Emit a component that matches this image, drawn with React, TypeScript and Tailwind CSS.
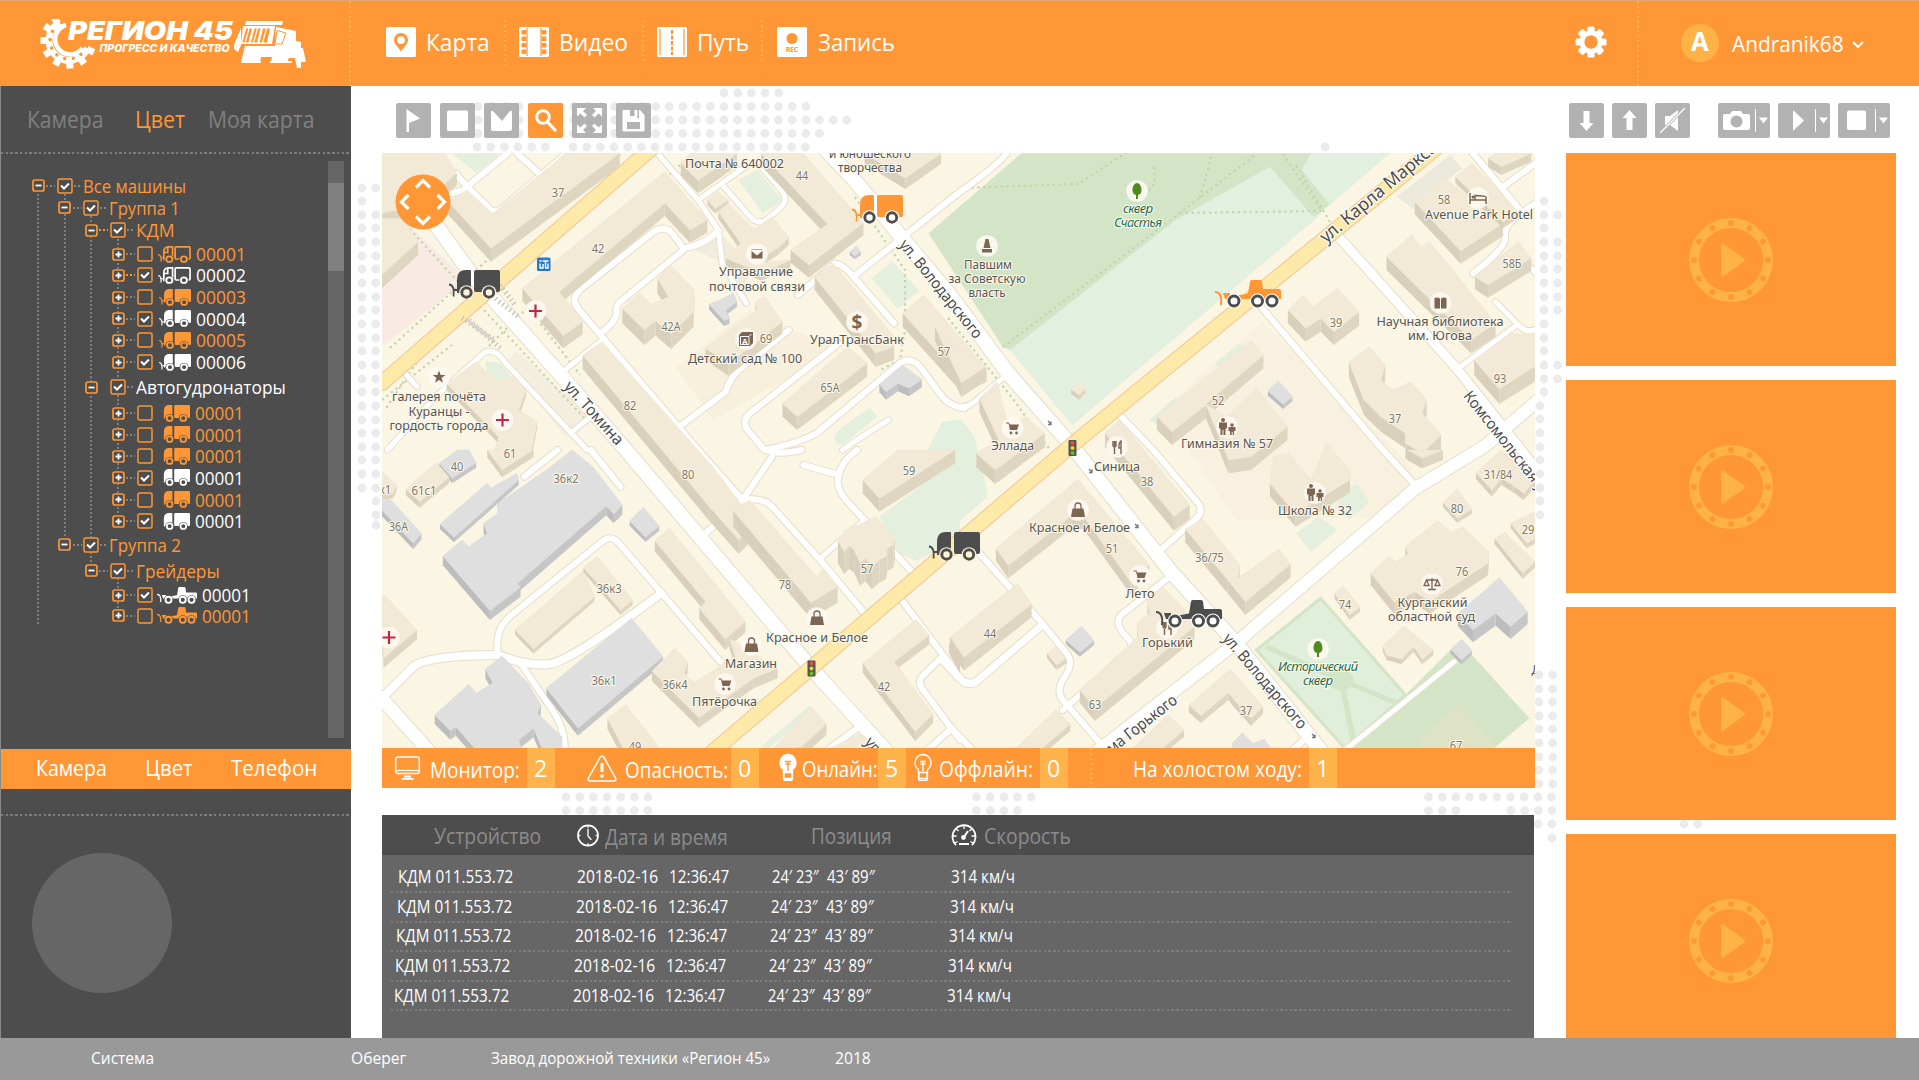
import { useLayoutEffect, useRef, type ReactNode } from "react";

/* ---------- text that is condensed to a fixed width ---------- */
function Fit({ w, children, className = "" }: { w: number; children: string; className?: string }) {
  const ref = useRef<HTMLSpanElement>(null);
  useLayoutEffect(() => {
    const el = ref.current;
    if (el) el.style.transform = `scaleX(${w / el.offsetWidth})`;
  }, [w, children]);
  return (
    <span className={`inline-block shrink-0 whitespace-nowrap ${className}`} style={{ width: w }}>
      <span ref={ref} className="inline-block origin-left whitespace-pre">{children}</span>
    </span>
  );
}

/* ---------- vehicles ---------- */
type VehicleProps = { className: string; wheel?: string; hub?: string; outline?: boolean; plow?: boolean };

function Truck({ className, wheel = "currentColor", hub = "#4d4d4d", outline = false, plow = true }: VehicleProps) {
  return (
    <svg viewBox="0 0 51 29" className={className} fill="none" preserveAspectRatio="none">
      {plow && <path d="M0 14.500c4 0 5.500 5 4.500 12M4 20h5" stroke="currentColor" strokeWidth="1.800" />}
      {outline ? (
        <g stroke="currentColor" strokeWidth="2.600">
          <path d="M9 23V10c0-5 2-8.500 7-8.500h6.500V23zM9 11h6V2" />
          <rect x="26.500" y="1.500" width="23" height="20.500" rx="1.500" />
        </g>
      ) : (
        <g fill="currentColor">
          <path d="M8 23V11C8 4 10 0 17 0h4q1 0 1 1v22z" />
          <rect x="25" width="26" height="22" rx="2" />
        </g>
      )}
      {[17.5, 40].map((x) => (
        <g key={x}>
          <circle cx={x} cy="22.500" r="7.300" fill={hub} />
          <circle cx={x} cy="22.500" r="4.700" stroke={wheel} strokeWidth="2.900" />
        </g>
      ))}
    </svg>
  );
}

function Grader({ className, wheel = "currentColor", hub = "#4d4d4d" }: VehicleProps) {
  return (
    <svg viewBox="0 0 66 28" className={className} fill="none" preserveAspectRatio="none">
      <path d="M0 12c5 0 7 5 6 13" stroke="currentColor" strokeWidth="2" />
      <path d="M8 13h7v2h10l8-1.500L35 1.500Q35 0 37 0h8q2 0 2 1.500l1 7.500h16q2 0 2 2v8H10z" fill="currentColor" />
      {[19, 42.5, 57].map((x) => (
        <g key={x}>
          <circle cx={x} cy="21" r="7.600" fill={hub} />
          <circle cx={x} cy="21" r="5" stroke={wheel} strokeWidth="3" />
        </g>
      ))}
    </svg>
  );
}

/* ---------- halftone backdrop: [y, first x, count] ---------- */
const DOT_RUNS: number[][] = [
  [93, 724, 5], [106.5, 478, 4], [106.5, 560, 19], [120, 478, 28], [133.5, 478, 26], [147, 477, 6], [147, 573, 18],
  [147, 1325, 1],
  [188, 362, 2], [201, 362, 1], [215, 362, 2], [228, 362, 2], [242, 362, 2], [256, 362, 2], [269, 362, 2], [283, 362, 2],
  [297, 362, 2], [310, 362, 2], [324, 362, 2], [338, 362, 2], [351, 362, 2], [365, 362, 2], [379, 362, 2],
  [392, 362, 2], [406, 362, 2], [420, 362, 2], [433, 362, 2], [447, 362, 2], [460, 362, 2], [474, 362, 2], [488, 362, 2],
  [501, 376, 1], [515, 376, 1], [525, 376, 1],
  [201, 1544, 1], [215, 1544, 2], [228, 1544, 1], [242, 1544, 2], [256, 1544, 2], [269, 1544, 2], [283, 1544, 2],
  [297, 1544, 2], [310, 1544, 2], [324, 1544, 1], [338, 1544, 1], [351, 1544, 1], [365, 1544, 2], [379, 1544, 2],
  [392, 1544, 1], [406, 1540, 1], [419, 1540, 1], [433, 1540, 1], [447, 1540, 1], [460, 1540, 1], [474, 1540, 1],
  [488, 1540, 1], [501, 1540, 1], [515, 1540, 1],
  [675, 1539, 2], [689, 1539, 2], [702, 1539, 2], [716, 1539, 2], [729, 1539, 2], [743, 1539, 2], [757, 1539, 2],
  [770, 1539, 2], [784, 1539, 2], [797, 566, 7], [810.5, 566, 7], [797, 976.5, 5], [810.5, 976.5, 4],
  [797, 1428.5, 10], [810.5, 1428.5, 3], [810.5, 1511, 4], [824, 1538, 2], [838, 1552, 1], [824, 1684, 2],
];

function Halftone() {
  return (
    <svg viewBox="0 0 1919 1080" className="pointer-events-none absolute inset-0 h-[1080px] w-[1919px]" fill="#ebebeb">
      {DOT_RUNS.flatMap(([y, x, n]) =>
        Array.from({ length: n }, (_, i) => <circle key={`${y}-${x}-${i}`} cx={x + i * 13.66} cy={y} r="4.400" />),
      )}
    </svg>
  );
}

/* ---------- header ---------- */
function Logo() {
  return (
    <svg viewBox="0 0 268 50" className="h-[50px] w-[268px]" fill="#fff">
      {[25, 56, 87, 118, 149, 180, 211, 238].map((a) => (
        <rect key={a} x="50" y="18" width="7.500" height="7" transform={`rotate(${a} 29.500 21.500)`} />
      ))}
      <path d="M21 3.500A20 20 0 1 0 48.500 29" fill="none" stroke="#fff" strokeWidth="7" />
      <path d="M27 6A15 15 0 1 0 43.500 29" fill="none" stroke="#fff" strokeWidth="4.500" />
      {[48, 75, 102, 129, 156, 183, 210].map((a) => (
        <circle key={a} cx="48" cy="21.500" r="1.700" fill="#ff9736" transform={`rotate(${a} 29.500 21.500)`} />
      ))}
      <g fontFamily="Inter" fontStyle="italic" stroke="#ff9736" strokeWidth="3" paintOrder="stroke">
        <text x="29" y="20.500" fontWeight="900" fontSize="25.500" textLength="165" lengthAdjust="spacingAndGlyphs">РЕГИОН 45</text>
      </g>
      <text x="60.500" y="33.200" fontFamily="Inter" fontStyle="italic" fontWeight="800" fontSize="10.800" textLength="130" lengthAdjust="spacingAndGlyphs">ПРОГРЕСС И КАЧЕСТВО</text>
      <path d="M207 2h37l-1 4h-37zM204 7h32l-3 18h-31zM237 8l20 4v10l5 1v26h-4l-2-10h-6l-2 4H202l4-16h30zM202 9l-7 17v4l4 3 3-7zM260 29h4l3 14h-5z" />
      <path d="M207 9.500h6l-3.500 14h-6zM215.500 9.500h6l-3.500 14h-6zM224 9.500h7l-3 14h-7.500z" fill="#ff9736" />
      <path d="M210 9l-4 15M218.500 9l-4 15M227.500 9l-4 15" stroke="#fff" strokeWidth="1.200" />
      <path d="M238 11.500l9 2.500-4 11h-7z" fill="none" stroke="#ff9736" strokeWidth="1" />
      <path d="M221 43l1-5h11l-1 5z" fill="#ff9736" />
      <path d="M202 43h20M231 43h22" stroke="#fff" strokeWidth="1.800" />
    </svg>
  );
}

const NavIcon = ({ children }: { children: ReactNode }) => (
  <svg viewBox="0 0 30 30" className="h-[30px] w-[30px] shrink-0"><rect width="30" height="30" rx="1.500" fill="#fff" />{children}</svg>
);

const VDots = ({ className }: { className: string }) => (
  <span className={`w-[2px] shrink-0 bg-[repeating-linear-gradient(#ffb347_0_2px,transparent_2px_4.900px)] ${className}`} />
);

function Header() {
  return (
    <header className="relative flex h-[86px] border-t border-[#e0a571] bg-[#ff9736] text-white">
      <div className="w-[349px] shrink-0 pl-[39px] pt-[18px]"><Logo /></div>
      <VDots className="h-[85px]" />
      <nav className="flex h-[82px] items-center pl-[35px] text-[24.500px]">
        <NavIcon>
          <path fillRule="evenodd" d="M15 6a7 7 0 0 0-7 7c0 4 4 6.500 7 11.500 3-5 7-7.500 7-11.500a7 7 0 0 0-7-7zm0 3.200a3.900 3.900 0 1 1 0 7.800 3.900 3.900 0 0 1 0-7.800z" fill="#ff9736" />
        </NavIcon>
        <Fit w={64} className="ml-[10px]">Карта</Fit>
        <VDots className="ml-[14px] h-[45px]" />
        <span className="w-[13px]" />
        <NavIcon>
          <path d="M8 1v28M22 1v28" stroke="#ff9736" strokeWidth="1.200" />
          {[3, 9.5, 16, 22.5].map((y) => (
            <g key={y} fill="#ff9736"><rect x="2.500" y={y} width="5" height="4.500" rx="1" /><rect x="22.500" y={y} width="5" height="4.500" rx="1" /></g>
          ))}
        </NavIcon>
        <Fit w={69} className="ml-[10px]">Видео</Fit>
        <VDots className="ml-[14px] h-[45px]" />
        <span className="w-[13px]" />
        <NavIcon>
          <path d="M3 2v26M27 2v26" stroke="#ff9736" strokeWidth="1.200" />
          <path d="M15 3v25" stroke="#ff9736" strokeWidth="2.200" strokeDasharray="4 1.500" />
        </NavIcon>
        <Fit w={52} className="ml-[10px]">Путь</Fit>
        <VDots className="ml-[12px] h-[45px]" />
        <span className="w-[14px]" />
        <NavIcon>
          <circle cx="15" cy="11.500" r="5.500" fill="#ff9736" />
          <text x="15" y="25.200" fontFamily="Open Sans" fontWeight="700" fontSize="7" textAnchor="middle" fill="#ff9736" textLength="12.500">REC</text>
        </NavIcon>
        <Fit w={77} className="ml-[11px]">Запись</Fit>
      </nav>
      <div className="ml-auto flex h-[85px]">
        <svg viewBox="-16 -16 32 32" className="mr-[30.500px] mt-[25px] h-8 w-8">
          {[0, 45, 90, 135].map((a) => <rect key={a} x="-3.600" y="-15.500" width="7.200" height="31" rx="1.500" fill="#fff" transform={`rotate(${a})`} />)}
          <circle r="11.500" fill="#fff" /><circle r="6.700" fill="#ff9736" />
        </svg>
        <VDots className="h-[85px]" />
        <div className="ml-[42px] mt-[23px] flex h-[38px] w-[38px] items-center justify-center rounded-full bg-[#ffb347] pb-1 text-[27px] font-bold"><Fit w={18}>A</Fit></div>
        <div className="ml-[13px] mt-[24px] text-[22.500px] leading-[38px]"><Fit w={112}>Andranik68</Fit></div>
        <svg viewBox="0 0 12 8" className="ml-[8px] mr-[55px] mt-[40px] h-2 w-3"><path d="M1 1l5 5 5-5" fill="none" stroke="#fff" strokeWidth="2" /></svg>
      </div>
    </header>
  );
}

/* ---------- sidebar ---------- */
const HLine = ({ className = "" }: { className?: string }) => (
  <div className={`h-[2px] bg-[repeating-linear-gradient(90deg,#7d7d7d_0_2.400px,transparent_2.400px_4.730px)] ${className}`} />
);

function Expander({ open }: { open: boolean }) {
  return (
    <svg viewBox="0 0 13 13" className="h-[13px] w-[13px] shrink-0 bg-[#4d4d4d]" fill="none">
      <rect x="1" y="1" width="11" height="11" rx="2" stroke="#ff9736" strokeWidth="1.700" />
      <path d={open ? "M3.5 6.500h6" : "M3.5 6.500h6M6.500 3.500v6"} stroke="#fff" strokeWidth="1.800" />
    </svg>
  );
}

function Check({ on }: { on: boolean }) {
  return (
    <svg viewBox="0 0 16 16" className="h-4 w-4 shrink-0 bg-[#4d4d4d]" fill="none">
      <rect x="1" y="1" width="14" height="14" rx="1.500" stroke="#ff9736" strokeWidth="1.500" />
      {on && <path d="M4 7.500l3 3L12 5.500" stroke="#fff" strokeWidth="2" />}
    </svg>
  );
}

type Row = { lvl: 0 | 1 | 2 | 3; gap: string; t: string; w: number; on?: boolean; white?: boolean; v?: "kdmo" | "kdm" | "tank" | "grader"; hot?: boolean; bare?: boolean };
const ROWS: Row[] = [
  { lvl: 0, gap: "mt-0", t: "Все машины", w: 103, on: true },
  { lvl: 1, gap: "mt-[2px]", t: "Группа 1", w: 71, on: true },
  { lvl: 2, gap: "mt-[2.5px]", t: "КДМ", w: 39, on: true, hot: true },
  { lvl: 3, gap: "mt-[4px]", t: "00001", w: 50, v: "kdmo" },
  { lvl: 3, gap: "mt-[1px]", t: "00002", w: 50, v: "kdmo", on: true, white: true, hot: true },
  { lvl: 3, gap: "mt-[2px]", t: "00003", w: 50, v: "kdm" },
  { lvl: 3, gap: "mt-[1.5px]", t: "00004", w: 50, v: "kdm", on: true, white: true },
  { lvl: 3, gap: "mt-[1.5px]", t: "00005", w: 50, v: "kdm" },
  { lvl: 3, gap: "mt-[2px]", t: "00006", w: 50, v: "kdm", on: true, white: true },
  { lvl: 2, gap: "mt-[5px]", t: "Автогудронаторы", w: 150, on: true, white: true, bare: true },
  { lvl: 3, gap: "mt-[6px]", t: "00001", w: 49, v: "tank" },
  { lvl: 3, gap: "mt-[1.5px]", t: "00001", w: 49, v: "tank" },
  { lvl: 3, gap: "mt-[1.5px]", t: "00001", w: 49, v: "tank" },
  { lvl: 3, gap: "mt-[1.5px]", t: "00001", w: 49, v: "tank", on: true, white: true },
  { lvl: 3, gap: "mt-[2px]", t: "00001", w: 49, v: "tank" },
  { lvl: 3, gap: "mt-[1.5px]", t: "00001", w: 49, v: "tank", on: true, white: true },
  { lvl: 1, gap: "mt-[3.5px]", t: "Группа 2", w: 72, on: true },
  { lvl: 2, gap: "mt-[6px]", t: "Грейдеры", w: 84, on: true },
  { lvl: 3, gap: "mt-[4.5px]", t: "00001", w: 49, v: "grader", on: true, white: true },
  { lvl: 3, gap: "mt-[0.5px]", t: "00001", w: 49, v: "grader" },
];
const INDENT = ["pl-[31px]", "pl-[57.5px]", "pl-[84px]", "pl-[111px]"];

function TreeRow({ r }: { r: Row }) {
  const link = r.hot
    ? "bg-[repeating-linear-gradient(90deg,#ff9736_0_2px,transparent_2px_4px)]"
    : "bg-[repeating-linear-gradient(90deg,#858585_0_2px,transparent_2px_4px)]";
  return (
    <div className={`relative flex h-5 items-center ${INDENT[r.lvl]} ${r.gap} ${r.white ? "text-white" : "text-[#ff9736]"}`}>
      <Expander open={r.lvl < 3} />
      <span className={`mx-[1.500px] h-[2px] w-[9px] ${r.bare ? "" : link}`} />
      <Check on={!!r.on} />
      {r.v ? (
        <>
          {r.v === "kdmo" && <Truck outline className="ml-[5.500px] h-[17px] w-[33px]" />}
          {r.v === "kdm" && <Truck className="ml-[6.500px] h-[17px] w-[32px]" />}
          {r.v === "tank" && <Truck plow={false} className="ml-[6px] h-[17px] w-[31px]" />}
          {r.v === "grader" && <Grader className="ml-[4.500px] h-[17px] w-[40px]" />}
          <Fit w={r.w} className="ml-[5px] text-[18.500px] leading-5">{r.t}</Fit>
        </>
      ) : (
        <>
          <span className="mx-[1px] h-[2px] w-[8px] bg-[repeating-linear-gradient(90deg,#858585_0_2px,transparent_2px_4px)]" />
          <Fit w={r.w} className="text-[18.500px] leading-5">{r.t}</Fit>
        </>
      )}
    </div>
  );
}

const GUIDE = "absolute w-[2px] bg-[repeating-linear-gradient(#808080_0_2px,transparent_2px_4px)]";

function Sidebar() {
  return (
    <aside className="relative flex h-[952px] w-[351px] shrink-0 flex-col border-l border-[#8a8a8a] bg-[#4d4d4d]">
      <div className="flex h-[66px] items-center pl-[26px] text-[23px] text-[#808080]">
        <Fit w={76}>Камера</Fit>
        <Fit w={50} className="ml-[32px] text-[#ff9736]">Цвет</Fit>
        <Fit w={107} className="ml-[23px]">Моя карта</Fit>
      </div>
      <HLine />
      <div className="relative flex h-[594.500px]">
        <div className={`${GUIDE} left-[36px] top-[40px] h-[432px]`} />
        <div className={`${GUIDE} left-[63px] top-[40px] h-[343px]`} />
        <div className={`${GUIDE} left-[89px] top-[62px] h-[348px]`} />
        <div className={`${GUIDE} left-[116px] top-[85px] h-[288px]`} />
        <div className={`${GUIDE} left-[116px] top-[424px] h-[36px]`} />
        <div className="-ml-[0.500px] w-[327px] pt-[21.500px]">{ROWS.map((r, i) => <TreeRow key={i} r={r} />)}</div>
        <div className="ml-[0.500px] mt-[7px] h-[577px] w-[15.500px] bg-[#666] pt-[22px]"><div className="h-[88px] bg-[#808080]" /></div>
      </div>
      <div className="flex h-[40px] items-center bg-[#ff9736] pb-0.5 pl-[34.500px] text-[22px] text-white">
        <Fit w={71}>Камера</Fit>
        <Fit w={48} className="ml-[38px]">Цвет</Fit>
        <Fit w={86} className="ml-[38px]">Телефон</Fit>
      </div>
      <HLine className="mt-[25.500px]" />
      <div className="ml-[30.500px] mt-[36.500px] h-[140px] w-[140px] rounded-full bg-[#666]" />
    </aside>
  );
}

/* ---------- toolbar ---------- */
const Tool = ({ hot = false, wide = false, children }: { hot?: boolean; wide?: boolean; children: ReactNode }) => (
  <button className={`flex h-[35px] shrink-0 items-center rounded-[2px] ${wide ? "w-[52px]" : "w-[35px]"} ${hot ? "bg-[#ff9736]" : "bg-[#b2b2b2]"}`}>
    <svg viewBox="0 0 35 35" className="h-[35px] w-[35px] shrink-0" fill="#fff">{children}</svg>
    {wide && <svg viewBox="0 0 17 35" className="h-[35px] w-[17px]"><path d="M2.500 6v23" stroke="#fff" /><path d="M6 14.500h9l-4.500 6z" fill="#fff" /></svg>}
  </button>
);

function Toolbar() {
  return (
    <div className="flex h-[67px] items-start pl-[44.500px] pt-[17px]">
      <div className="flex gap-[9.100px]">
        <Tool><path d="M10.500 6L24 15.500 13 20v9h-2.500z" /></Tool>
        <Tool><rect x="7" y="7.500" width="21" height="20.500" rx="1.500" /></Tool>
        <Tool><path d="M7 9q0-2 2-1l9 10 8-10q2-1 2 1v17q0 2-2 2H9q-2 0-2-2z" /></Tool>
        <Tool hot><circle cx="15" cy="14" r="6.300" fill="none" stroke="#fff" strokeWidth="3" /><path d="M19.500 19l7.500 8" stroke="#fff" strokeWidth="3.200" strokeLinecap="round" /></Tool>
        <Tool><path d="M5 5h9l-3 3 4 4-2.500 2.500-4-4-3.500 3zM30 5h-9l3 3-4 4 2.500 2.500 4-4 3.500 3zM5 30h9l-3-3 4-4-2.500-2.500-4 4-3.500-3zM30 30h-9l3-3-4-4 2.500-2.500 4 4 3.500-3z" /></Tool>
        <Tool><path fillRule="evenodd" d="M6.500 8q0-1 1-1H12v8h11V7h1l4.500 5v15q0 1.500-1.500 1.500H8q-1.500 0-1.500-1.500zM11 19v7h13v-7zM18.500 7h3v6h-3zM12 7h2v6h7v2h-9z" /></Tool>
      </div>
      <div className="ml-[918.500px] flex gap-[8px]">
        <Tool><path d="M14.500 8h6v12h4l-7 8-7-8h4z" /></Tool>
        <Tool><path d="M14.500 27h6V15h4l-7-8-7 8h4z" /></Tool>
        <Tool><path d="M10 13h5l8-6v21l-8-6h-5z" /><path d="M5 30L30 5" stroke="#b2b2b2" strokeWidth="3" /><path d="M5 30L30 5" stroke="#fff" strokeWidth="1.200" /></Tool>
      </div>
      <div className="ml-[28px] flex gap-[8px]">
        <Tool wide><path d="M7 11h5l2-3h9l2 3h5q2 0 2 2v12q0 2-2 2H7q-2 0-2-2V13q0-2 2-2z" /><circle cx="18.500" cy="18.500" r="6" fill="#b2b2b2" /></Tool>
        <Tool wide><path d="M15 8q0-1 1 0l10 9.500L16 27q-1 1-1 0z" /></Tool>
        <Tool wide><rect x="9" y="7.500" width="19" height="19.500" rx="2" /></Tool>
      </div>
    </div>
  );
}

/* ---------- map ---------- */
const TILES = [
  "matrix(.36990 0 0 .33333 380 150)",
  "matrix(.37628 0 0 .33333 950 150)",
  "matrix(.36990 0 0 .33333 380 450)",
  "matrix(.37628 0 0 .33333 950 450)",
];

const GREENS: [number, string, string][] = [
  [0, "#f9ebe3", "5,205 60,205 235,390 5,590"],
  [0, "#e4efdd", "195,10 325,10 260,68"], [0, "#e4efdd", "970,90 1020,60 1088,150 1035,190"],
  [0, "#e4efdd", "1330,385 1385,333 1457,422 1400,477"], [0, "#e4efdd", "1228,862 1245,835 1325,773 1345,800 1250,885 1232,882"],
  [0, "#e4efdd", "285,632 325,640 355,680 320,690 290,675"], [0, "#f3eedd", "340,635 370,605 570,800 500,860"],
  [0, "#f7f0dc", "800,650 1000,480 1240,600 900,810"], [0, "#f0ecdd", "850,300 910,240 990,330 990,460 930,340"],
  [1, "#d4e5c7", "-57,250 190,10 1168,10 325,825 160,600 140,590"],
  [1, "#e4f0df", "160,600 600,210 850,50 965,200 990,190 325,825"], [1, "#e4f0df", "935,60 960,10 1168,10 1010,165"],
  [1, "#ebe8dc", "1187,140 1330,15 1360,55 1230,175"], [1, "#f8f1df", "560,780 830,515 1230,950 1180,1100 760,1110"],
  [1, "#e4efdd", "530,810 600,740 620,760 560,830"], [1, "#e4efdd", "705,640 770,580 795,600 730,665"],
  [1, "#e4f0df", "-60,900 -20,815 30,808 65,860 100,1030 0,1140 -60,1060"],
  [2, "#e4efdd", "1350,200 1568,20 1568,270 1450,332 1405,310"], [2, "#e4efdd", "1030,890 1160,768 1175,780 1050,895"],
  [3, "#e4efdd", "0,240 0,0 60,20 100,140"], [3, "#e4efdd", "1028,150 1080,100 1115,155 1060,210"],
  [3, "#e4efdd", "920,250 980,200 1030,240 960,305"],
  [3, "#e1efda", "985,445 1210,735 1050,895 815,600"],
  [3, "#d4e5c7", "1330,600 1385,612 1540,805 1440,900 1050,900 1210,735"],
];

/* [tile, width, path] */
const ROADS: [number, number, string][] = [
  [0, 5, "M750 10L860 150 915 240 925 340 990 460"], [0, 5, "M860 150L1000 40"],
  [0, 5, "M930 110L1000 200Q1020 225 1045 210L1085 170Q1105 150 1085 120L1030 50"],
  [0, 6, "M915 240Q880 285 820 295L790 250Q770 225 740 245L540 420Q515 450 535 475L860 900"],
  [0, 6, "M820 300L655 450Q635 465 640 490 635 520 595 550"], [0, 5, "M500 660L595 575"],
  [0, 6, "M810 830L935 725Q945 685 970 660L1105 540"],
  [0, 6, "M1230 340Q1255 345 1280 380L1390 520"], [0, 6, "M1130 435L1220 350"], [0, 6, "M1280 380L1568 125"],
  [0, 6, "M205 70L235 110 345 10"], [0, 6, "M195 130L240 115 300 180Q315 190 330 175L500 15"], [0, 6, "M370 10L430 70"],
  [0, 5, "M60 660L100 710M20 900L150 740 280 610Q310 590 340 640L560 900"], [0, 5, "M520 845L570 800"],
  [0, 6, "M1040 900L990 835Q980 810 1000 790L1240 580"],
  [0, 6, "M1040 900Q1130 880 1180 850L1400 645Q1430 615 1460 650L1520 740Q1545 770 1580 775"],
  [0, 5, "M1250 900Q1300 860 1375 810"],
  [1, 6, "M150 10Q135 40 0 148"], [1, 5, "M145 680L60 760Q25 785 -15 750"], [1, 6, "M1390 10L1515 180"], [1, 6, "M1470 110L1568 30"],
  [1, 6, "M1568 150L1500 205Q1470 230 1475 270 1470 300 1390 370"], [1, 5, "M1345 660L1500 530M1450 455L1515 530Q1540 555 1568 530M1545 355L1568 385"],
  [1, 6, "M455 800L540 900 660 1060Q675 1085 655 1105L560 1200"],
  [2, 6, "M570 0L650 110"], [2, 6, "M390 80L480 0"], [2, 6, "M880 250L980 150 1060 20"], [2, 6, "M860 0L980 150"],
  [2, 6, "M980 150Q1035 140 1060 170L1190 330 1310 490"], [2, 6, "M1030 -10Q1060 20 1140 0"],
  [2, 6, "M1145 45L1240 75Q1230 110 1260 150L1450 380"], [2, 6, "M1290 0Q1250 30 1240 75"], [2, 5, "M1190 325L1310 210"],
  [2, 8, "M0 750L90 650Q130 615 320 615 400 650 460 642 520 630 760 430"],
  [2, 6, "M318 610Q310 540 350 500L600 275Q625 250 650 285L920 635"], [2, 6, "M380 640L460 770Q500 830 500 900"],
  [2, 13, "M0 740L130 900"], [2, 6, "M1410 450L1580 700M1520 620L1465 680Q1450 700 1475 730L1568 870"],
  [2, 6, "M1290 835L1210 900M1540 840L1480 900"],
  [3, 6, "M70 300L245 520 310 610Q330 640 305 680 280 720 300 750L430 920"], [3, 7, "M245 525L75 690Q50 715 20 680L-20 630"],
  [3, 6, "M590 375L460 490Q435 510 460 550 490 580 480 600L300 780"], [3, 5, "M1340 635L1050 900"],
  [3, 6, "M0 830L60 900M950 860L910 900"],
];

/* [tile, colour group, wall height, roof] */
const B = "b";
const G = "g";
const BUILDINGS: [number, string, number, string][] = [
  [0, B, 38, "5,10 175,10 208,68 110,165 5,190"], [0, B, 40, "185,155 235,120 305,190 490,20 500,10 648,10 300,295"],
  [0, B, 40, "5,205 62,205 103,275 5,375"], [0, B, 38, "385,415 770,65 885,210 838,240 770,160 485,425 548,515 495,557"],
  [0, B, 45, "655,475 700,430 735,462 780,440 750,385 785,345 850,420 848,485 787,552 745,512 715,540"],
  [0, B, 38, "1030,10 1145,10 1307,218 1160,345 1110,300 1210,222"], [0, B, 38, "813,38 840,10 965,10 860,92"],
  [0, B, 32, "1310,10 1517,10 1420,85"], [0, B, 15, "885,150 912,125 942,150 905,175"],
  [0, B, 22, "915,185 940,160 1012,238 1060,200 1105,262 1080,290 1010,340 1110,330 1030,370 935,325 975,280"],
  [0, B, 40, "1175,380 1225,340 1390,560 1390,590 1340,610"], [0, B, 40, "1088,760 1265,590 1317,640 1128,800"],
  [0, B, 40, "1413,490 1470,435 1640,655 1575,690"], [0, B, 42, "548,615 600,575 900,950 1015,1120 970,1170 890,1070"],
  [0, B, 20, "180,700 260,635 310,690 360,680 395,720 375,780 425,815 410,900 310,900 320,860"],
  [0, B, 36, "880,595 1020,480 1015,455 1040,438 1088,515 942,642"],
  [0, G, 24, "1350,703 1412,645 1465,688 1430,715 1400,700 1368,725"], [0, G, 16, "890,463 918,450 955,430 965,455 935,480 945,505 930,512"],
  [0, G, 10, "1270,305 1288,288 1300,305 1283,318"],
  [1, B, 38, "1235,155 1310,80 1470,220 1357,303"], [1, B, 20, "1343,80 1388,40 1510,185 1470,215"], [1, B, 25, "1430,25 1450,10 1545,10 1465,50"],
  [1, B, 40, "1160,320 1227,255 1250,290 1275,275 1450,520 1385,570"], [1, B, 38, "1395,380 1510,275 1545,325 1430,405"],
  [1, B, 40, "898,480 940,435 965,470 1030,415 1087,487 1020,545 985,505 945,535"],
  [1, B, 45, "1393,630 1490,550 1555,555 1568,640 1460,717"],
  [1, B, 40, "550,800 800,572 833,615 680,762 735,800 815,715 897,830 800,920 740,930 680,765 590,845"],
  [1, B, 45, "1060,637 1115,590 1157,645 1145,690 1175,720 1225,695 1267,750 1255,790 1305,855 1255,910 1210,880 1210,850 1145,800 1100,750"],
  [1, B, 42, "-40,530 0,575 95,650 30,700"], [1, B, 42, "78,745 125,695 155,830 200,800 252,850 120,960 70,910 130,870"],
  [1, G, 14, "845,723 872,692 910,740 885,763"], [1, B, 14, "322,718 342,695 360,715 343,735"],
  [1, B, 42, "412,850 450,810 637,1065 595,1100"],
  [1, B, 38, "860,920 900,910 960,990 1000,880 1063,960 1063,990 918,1092 850,1000"],
  [2, G, 28, "170,318 222,270 240,290 290,250 280,220 318,190 318,160 450,60 520,0 575,50 655,165 632,192 612,168 372,400 380,412 297,482"],
  [2, G, 15, "162,222 290,100 300,115 370,70 375,90 200,262"], [2, G, 15, "160,40 210,0 240,0 260,38 195,85"],
  [2, G, 18, "5,140 25,145 112,250 90,280 5,180"], [2, G, 14, "675,213 712,172 755,228 718,262"],
  [2, G, 22, "450,715 680,505 765,620 535,835"],
  [2, G, 27, "148,795 240,703 260,730 305,698 285,658 330,618 400,700 435,765 425,790 492,860 492,900 440,900 415,835 375,870 385,900 260,900 205,830 190,842"],
  [2, B, 22, "290,0 415,0 330,60"], [2, B, 18, "70,118 152,37 187,82 107,155"], [2, B, 16, "5,65 45,105 35,130 5,130"],
  [2, B, 14, "365,540 500,410 550,360 580,440 415,597"], [2, B, 15, "550,352 587,320 683,450 650,480"],
  [2, B, 28, "-5,430 15,437 100,540 10,625"], [2, B, 32, "743,272 782,235 920,420 988,515 933,568 863,475 880,455"],
  [2, B, 48, "955,182 1000,150 1180,380 1200,355 1237,410 1165,458"],
  [2, B, 68, "1238,272 1255,255 1255,242 1340,200 1392,265 1388,285 1372,295 1368,320 1350,330 1330,350 1312,325 1298,340 1282,300 1268,288 1255,305"],
  [2, B, 40, "1305,90 1400,0 1555,0 1350,145"], [2, B, 30, "735,663 797,595 832,637 822,670 850,697 960,620 945,565 1075,655 1010,685 862,803"],
  [2, B, 28, "1305,640 1450,508 1485,555 1390,635 1495,792 1447,845"], [2, B, 32, "615,805 665,765 760,900 660,900"],
  [2, B, 32, "1060,900 1165,770 1207,822 1140,890"], [2, B, 30, "1538,580 1568,555 1568,640"], [2, B, 20, "1205,900 1300,850 1350,895"],
  [3, B, 38, "122,295 340,88 530,345 480,395 355,200 325,195 155,347"],
  [3, B, 40, "625,237 672,207 770,345 765,385 875,297 905,343 785,455 738,390"],
  [3, B, 40, "0,560 180,400 217,462 37,622"],
  [3, B, 38, "345,720 500,560 497,520 530,490 525,450 565,410 650,510 650,530 385,775"],
  [3, G, 13, "308,570 350,528 383,572 345,607"], [3, B, 15, "258,610 280,590 310,625 283,645"],
  [3, B, 22, "635,765 745,658 832,770 800,805 755,750 740,728 667,797"],
  [3, B, 36, "1118,370 1165,320 1185,335 1218,312 1210,290 1295,212 1333,247 1362,230 1432,305 1430,340 1275,455 1235,425 1180,455"],
  [3, G, 37, "1350,492 1460,383 1535,485 1490,530 1450,490 1390,540"], [3, G, 13, "1330,598 1360,568 1387,602 1360,630"],
  [3, B, 15, "1150,588 1205,528 1285,600 1255,628 1232,590 1200,628 1160,615"], [3, B, 15, "1022,430 1045,408 1090,470 1062,495"],
  [3, B, 20, "1398,68 1465,0 1555,90 1525,130 1495,105 1465,85 1440,120"], [3, B, 14, "1310,157 1348,117 1387,177 1348,205"],
  [3, B, 15, "1490,220 1555,185 1555,265 1533,280"], [3, B, 17, "1447,265 1475,247 1555,335 1522,370"],
  [3, B, 20, "170,900 280,780 320,822 240,900"], [3, B, 20, "480,900 580,795 622,840 560,900"], [3, B, 30, "1215,0 1310,0 1255,25"],
  [3, G, 15, "750,880 777,848 805,880 835,868 855,900 750,900"],
];

function Building({ kind, h, pts }: { kind: string; h: number; pts: string }) {
  const p = pts.split(" ").map((s) => s.split(",").map(Number));
  const area = p.reduce((s, a, i) => { const b = p[(i + 1) % p.length]; return s + a[0] * b[1] - b[0] * a[1]; }, 0);
  const [roof, left, right] = kind === G ? ["#dfdfdf", "#bdbdbd", "#c6c6c6"] : ["#f2ead6", "#d9d0bc", "#dfd6c2"];
  return (
    <g>
      {p.map((a, i) => {
        const b = p[(i + 1) % p.length];
        const dx = (b[0] - a[0]) * (area > 0 ? 1 : -1);
        if (dx >= 0) return null;
        const falling = (b[1] - a[1]) * (b[0] - a[0]) > 0;
        return <path key={i} d={`M${a}L${b}v${h}L${a[0]} ${a[1] + h}z`} fill={falling ? left : right} />;
      })}
      <polygon points={pts} fill={roof} stroke={kind === G ? "#d2d2d2" : "#e8dfcb"} strokeWidth="1" />
    </g>
  );
}

/* main streets: [width, path] */
const STREETS: [number, string][] = [
  [14, "M425 210L472 275 565 380 626 450 811 668 887 752"],
  [14, "M824 148L857 183 898 233 950 295 1007 372 1072 446 1172 573 1236 643 1322 752"],
  [12, "M1096 752L1236 643 1416 488 1485 446 1550 390"],
  [9, "M1337 235L1458 370 1545 480"], [6, "M1262 308L1383 450 1418 488"],
];
const AVENUES = ["M652 148L382 383", "M1436 148L1073 444 811 668 710 754"];
const PATHS: string[] = [
  "M390 348L640 122", "M382 400L452 345", "M398 216L470 295 586 420", "M465 305L428 345 385 410", "M680 165L550 285 480 355", "M855 197L905 270 905 330 900 360 880 370",
  "M960 188L1078 184 1130 150", "M1003 347L1180 213 1255 155", "M1180 213L1322 211 1280 150", "M1200 198L1213 150", "M1154 167Q1160 200 1122 194",
  "M948 318L1010 395 1050 450", "M620 154L600 190M530 310L580 375", "M1330 222L1296 165",
];

/* [x centre, baseline, text, width] */
const LABELS: [number, number, string, number][] = [
  [734.5, 168, "Почта № 640002", 99], [870, 158, "и юношеского", 82], [870, 172, "творчества", 64], [756, 276, "Управление", 74],
  [757, 291, "почтовой связи", 96], [857, 344, "УралТрансБанк", 94], [745, 363, "Детский сад № 100", 114], [439, 401, "галерея почёта", 94],
  [439, 416, "Куранцы -", 61], [439, 430, "гордость города", 99], [988, 269, "Павшим", 48], [987, 283, "за Советскую", 77], [987, 297, "власть", 37],
  [1479, 219, "Avenue Park Hotel", 108], [1440, 326, "Научная библиотека", 127], [1440, 340, "им. Югова", 64], [1227, 448, "Гимназия № 57", 92],
  [1012.5, 450, "Эллада", 43], [1117, 471, "Синица", 46], [1079.5, 532, "Красное и Белое", 101], [1140, 598, "Лето", 29], [1167.5, 647, "Горький", 51],
  [1315, 515, "Школа № 32", 74], [1432.5, 607, "Курганский", 70], [1431.5, 621, "областной суд", 87], [817, 642, "Красное и Белое", 102],
  [751, 668, "Магазин", 52], [724.5, 706, "Пятёрочка", 65], [1536, 674, "Д", 9],
];
const NUMBERS: [number, number, string][] = [
  [802, 180, "44"], [558, 197, "37"], [598, 253, "42"], [671, 331, "42А"], [766, 343, "69"], [944, 356, "57"], [830, 392, "65А"], [630, 410, "82"],
  [1444, 204, "58"], [1512, 268, "58Б"], [1336, 327, "39"], [1500, 383, "93"], [1218, 405, "52"], [1395, 423, "37"], [1147, 486, "38"], [1112, 553, "51"],
  [1209.5, 562, "36/75"], [990, 638, "44"], [1095, 709, "63"], [1246, 715, "37"], [1498, 479, "31/84"], [1457, 513, "80"], [1528, 534, "29"],
  [1462, 576, "76"], [1345, 609, "74"], [1456, 750, "67"], [510, 458, "61"], [457, 471, "40"], [424, 495, "61с1"], [398.5, 531, "36А"], [566, 483, "36к2"],
  [688, 479, "80"], [909, 475, "59"], [609, 593, "36к3"], [867, 573, "57"], [785, 589, "78"], [604, 685, "36к1"], [675, 689, "36к4"], [884, 691, "42"],
  [635, 751, "49"], [385, 494, "к1"],
];

const POI_SHAPES: Record<string, ReactNode> = {
  mail: <path d="M-6-5H6V5H-6zM-6-4L0 1 6-4" fill="#7d6551" stroke="#fff" strokeWidth=".9" />,
  star: <path d="M0-6.500L1.700-2H6.300L2.600 1 4 5.700 0 3-4 5.700-2.600 1-6.300-2H-1.700z" />,
  cross: <path d="M0-6.500V6.500M-6.500 0H6.500" stroke="#c5234d" strokeWidth="2.200" />,
  bag: <><path d="M-5.500-1.500H5.500L7 7H-7z" /><path d="M-3 0V-4a3 3 0 0 1 6 0v4" fill="none" stroke="#7d6551" strokeWidth="1.300" /></>,
  cart: <><path d="M-6.500-5.500h3l.8 2H6.500L4.500 2H-2.500L-4-4.500h-2.500z" /><circle cx="-1.500" cy="5" r="1.400" /><circle cx="4" cy="5" r="1.400" /></>,
  tree: <path d="M0-8C3-8 4.500-4 4.500-1S3 3.500 1 4V8h-2V4C-3 3.500-4.500 2-4.500-1S-3-8 0-8z" fill="#4f8a1e" />,
  monument: <path d="M-1.500-7h3L3.500 2h-7zM-5 3H5V6.500H-5z" />,
  bed: <><path d="M-8-5V6M-8 2H8V6M8 2V-1Q8-2-3-2.500V2" fill="none" stroke="#7d6551" strokeWidth="1.500" /><circle cx="-5" cy="-1" r="1.500" /></>,
  book: <path d="M-6-5Q-3-6-.5-4.500V5.500H-6zM6-5Q3-6 .5-4.500V5.500H6z" />,
  family: <><circle cx="-4" cy="-7" r="2" /><path d="M-8-4.500h8v6h-1.500V8h-2V3h-1v5h-2V1.500H-8z" /><circle cx="5" cy="-2" r="1.800" /><path d="M1.500 0h7v4H7v4H5.700V5h-1v3H3V4H1.500z" /></>,
  fork: <path d="M-4-6v4q0 2 1.500 2V7M-1-6v4q0 2-1.500 2M-2.500-6v5M4 7V-6Q1.500-4 2 1h2" fill="none" stroke="#7d6551" strokeWidth="1.400" />,
  scales: <path d="M0-6V5.500M-4 5.500h8M-5.500-4H5.500M-5.500-4L-8 1.500h5zM5.500-4L3 1.500h5z" fill="none" stroke="#7d6551" strokeWidth="1.300" />,
  dollar: <text y="7" textAnchor="middle" fontFamily="Noto Sans" fontWeight="700" fontSize="19">$</text>,
  cube: <><path d="M-7-4l3-3H7V4L4 7H-7z" /><path d="M-5.500-2.500H3V5.500H-5.500zM3.500-3l2-2" fill="none" stroke="#fff" /><text x="-1.200" y="4.500" fill="#fff" textAnchor="middle" fontFamily="Noto Sans" fontWeight="700" fontSize="7.500">A</text></>,
};
const POIS: [number, number, string][] = [
  [757, 254, "mail"], [857, 322, "dollar"], [746, 339, "cube"], [439, 377, "star"], [535.5, 311, "cross"], [502.5, 420, "cross"], [389, 637.5, "cross"],
  [1137, 191, "tree"], [987, 246, "monument"], [1478, 198, "bed"], [1440.5, 303, "book"], [1012.5, 428, "cart"], [1227, 427, "family"], [1117, 447, "fork"],
  [817, 618, "bag"], [751.5, 645, "bag"], [725, 684, "cart"], [1078, 510, "bag"], [1140, 576, "cart"], [1315, 493, "family"], [1167, 628, "fork"],
  [1432, 584, "scales"], [1318, 649, "tree"],
];
/* [x, y, angle, text, length, size, anchor] */
const STREET_NAMES: [number, number, number, string, number, number, "start" | "middle" | "end"][] = [
  [594, 413, 48, "ул. Томина", 80, 16, "middle"], [941, 289, 51, "ул. Володарского", 122, 15.5, "middle"],
  [1322, 239, -40, "ул. Карла Маркса", 147, 18, "start"], [1467, 393, 51.5, "Комсомольская ул.", 134, 15.5, "start"],
  [1265, 681, 49.5, "ул. Володарского", 120, 16, "middle"], [1175, 698, -38, "Максима Горького", 129, 16, "end"], [868, 739, 51, "ул. Томина", 78, 16, "start"],
];

function CityMap() {
  return (
    <svg viewBox="382 153 1153 595.500" className="block h-[595.500px] w-[1153px]" fontFamily="'Noto Sans', sans-serif">
      <rect x="382" y="153" width="1153" height="596" fill="#fbf5e3" />
      {GREENS.map(([t, c, p], i) => <polygon key={i} points={p} fill={c} transform={TILES[t]} />)}
      <g transform={TILES[3]} stroke="#d4e5c7" fill="none">
        <path d="M985 445L815 600 1050 895 1210 735z" strokeWidth="9" /><path d="M840 590L1040 690 1075 890M1040 690L1200 765" strokeWidth="15" />
        <circle cx="1040" cy="690" r="32" fill="#d4e5c7" /><path d="M1350 760L1450 885 1440 910H1260L1245 870z" fill="#dfe3c6" stroke="none" />
      </g>
      <g fill="none" stroke="#bfd6a8" strokeWidth="2.200" strokeDasharray="2.200 3.600">{PATHS.map((d) => <path key={d} d={d} />)}</g>
      <g fill="none" strokeLinecap="round" strokeLinejoin="round">
        <g stroke="#e6decb">
          {ROADS.map(([t, w, d]) => <path key={d} d={d} transform={TILES[t]} strokeWidth={w + 2} vectorEffect="non-scaling-stroke" />)}
          {STREETS.map(([w, d]) => <path key={d} d={d} strokeWidth={w + 2} />)}
        </g>
        <g stroke="#fff">
          {ROADS.map(([t, w, d]) => <path key={d} d={d} transform={TILES[t]} strokeWidth={w} vectorEffect="non-scaling-stroke" />)}
          {STREETS.map(([w, d]) => <path key={d} d={d} strokeWidth={w} />)}
        </g>
        {AVENUES.map((d) => <path key={d} d={d} stroke="#f0c592" strokeWidth="16" />)}
        {AVENUES.map((d) => <path key={d} d={d} stroke="#feeaa8" strokeWidth="14" />)}
        <path d="M469 320L500 348M485 290L520 318M462 318L495 340M500 285L515 305" stroke="#c9c6bd" strokeWidth="5" strokeDasharray="1.500 3" strokeLinecap="butt" />
      </g>
      {BUILDINGS.map(([t, k, h, p], i) => <g key={i} transform={TILES[t]}><Building kind={k} h={h} pts={p} /></g>)}
      <g fill="#7d6551">
        {POIS.map(([x, y, k]) => (
          <g key={`${x}-${y}`} transform={`translate(${x} ${y})`}><circle r="10.800" fill="#fdf9f2" fillOpacity=".9" />{POI_SHAPES[k]}</g>
        ))}
      </g>
      <g transform="translate(537 257.500)"><rect width="13.500" height="13.500" rx="1.500" fill="#2478cf" /><path d="M2.500 3.500h2M5.500 3.500h6M8.500 4v6M6 6.500v4H3V6M11 6v4.500H8" stroke="#fff" strokeWidth="1.400" fill="none" /></g>
      {[[1072.5, 448], [811.5, 668.5]].map(([x, y]) => (
        <g key={x} transform={`translate(${x} ${y})`}><rect x="-4" y="-8" width="8" height="16" rx="1" fill="#555" /><circle cy="-5" r="2" fill="#e0505a" /><circle r="2" fill="#f0d020" /><circle cy="5" r="2" fill="#5fc020" /></g>
      ))}
      {[[1050, 423], [1091, 471], [1137, 526], [1314, 736]].map(([x, y]) => (
        <path key={x} d={`M${x - 2} ${y - 2}l3 3m0-2.500v3h-3`} stroke="#777" strokeWidth="1.300" fill="none" />
      ))}
      <g fontSize="13.300" fill="#555" textAnchor="middle" stroke="#fdf8ea" strokeWidth="2.200" strokeLinejoin="round" paintOrder="stroke">
        {LABELS.map(([x, y, t, w]) => <text key={`${x}-${y}`} x={x} y={y} textLength={w} lengthAdjust="spacingAndGlyphs">{t}</text>)}
        <g fill="#7b776d" fontSize="12">{NUMBERS.map(([x, y, t]) => <text key={`${x}-${y}`} x={x} y={y} textLength={t.length * (t.includes("/") ? 5.7 : 6.3)} lengthAdjust="spacingAndGlyphs">{t}</text>)}</g>
        <g fill="#1f6b4c" fontStyle="italic">
          <text x="1138" y="213" textLength="30">сквер</text><text x="1138" y="227" textLength="48">Счастья</text>
          <text x="1318" y="671" textLength="80">Исторический</text><text x="1318" y="685" textLength="30">сквер</text>
        </g>
      </g>
      <g fill="#4c4c4c" stroke="#fff" strokeWidth="2.200" paintOrder="stroke" strokeLinejoin="round">
        {STREET_NAMES.map(([x, y, a, t, w, s, anchor]) => (
          <text key={`${x}-${y}`} transform={`translate(${x} ${y}) rotate(${a})`} y={s * 0.34} fontSize={s} textAnchor={anchor} textLength={w} lengthAdjust="spacingAndGlyphs">{t}</text>
        ))}
      </g>
    </svg>
  );
}

function MapPanel() {
  return (
    <div className="relative h-[595.500px] w-[1153px] overflow-hidden">
      <CityMap />
      <svg viewBox="-28 -28 56 56" className="absolute left-[13px] top-[21px] h-[56px] w-[56px]">
        <circle r="27.500" fill="#ff9736" />
        {[0, 90, 180, 270].map((a) => <path key={a} d="M-7-14.500L0-21.500 7-14.500" fill="none" stroke="#fff" strokeWidth="3.200" transform={`rotate(${a})`} />)}
      </svg>
      <Truck className="absolute left-[67px] top-[117px] h-[29px] w-[51px] text-[#4d4d4d]" hub="#fbf3dc" />
      <Truck className="absolute left-[470px] top-[42px] h-[29px] w-[51px] text-[#ff9736]" wheel="#4d4d4d" hub="#fff" />
      <Truck className="absolute left-[547px] top-[379px] h-[29px] w-[51px] text-[#4d4d4d]" hub="#fdf3d0" />
      <Grader className="absolute left-[833px] top-[127px] h-[28px] w-[66px] text-[#ff9736]" wheel="#4d4d4d" hub="#fff" />
      <Grader className="absolute left-[774px] top-[447px] h-[28px] w-[66px] text-[#4d4d4d]" hub="#fff" />
    </div>
  );
}

/* ---------- status bar ---------- */
const Badge = ({ children, className }: { children: string; className: string }) => (
  <span className={`flex h-full w-[28px] shrink-0 items-center justify-center bg-[#ffb34a] text-[24px] ${className}`}><Fit w={13.5}>{children}</Fit></span>
);

function Bulb({ solid = false }: { solid?: boolean }) {
  return (
    <svg viewBox="0 0 20 28" className="mt-[5px] h-[28px] w-[20px] shrink-0 self-start" fill="none" stroke="#fff" strokeWidth="1.300">
      <path d="M10 1.500a8.300 8.300 0 0 0-4.500 15v9q0 2 2 2h5q2 0 2-2v-9a8.300 8.300 0 0 0-4.500-15z" fill={solid ? "#fff" : "none"} />
      <path d="M6 19.500h8v6H6z" fill="#ff9736" stroke="#fff" />
      <path d="M7 8.500h6M7.500 11h5M10 9v9" stroke={solid ? "#ff9736" : "#fff"} />
    </svg>
  );
}

function StatusBar() {
  return (
    <div className="flex h-[40px] w-[1153px] items-center bg-[#ff9736] pl-[13px] text-[22px] text-white">
      <svg viewBox="0 0 25 24" className="h-6 w-[25px] shrink-0" fill="none" stroke="#fff"><rect x=".8" y="1" width="23.400" height="16.500" rx="2" strokeWidth="1.400" /><path d="M1 14.500h23" strokeWidth="1.200" /><path d="M9 20.500h7M6.500 22.800h12" strokeWidth="1.800" /></svg>
      <Fit w={90} className="ml-[10px] pt-0.5">Монитор:</Fit>
      <Badge className="ml-[7px]">2</Badge>
      <svg viewBox="0 0 30 27" className="ml-[32px] h-[27px] w-[30px] shrink-0" fill="none" stroke="#fff"><path d="M13 2.500q2-3 4 0L28.500 23q1 3-2 3h-23q-3 0-2-3z" strokeWidth="1.500" /><path d="M15 8v9M15 19.500v3" strokeWidth="3" /></svg>
      <Fit w={103} className="ml-[8px] pt-0.5">Опасность:</Fit>
      <Badge className="ml-[3px]">0</Badge>
      <span className="w-[19px] shrink-0" />
      <Bulb solid />
      <Fit w={76} className="ml-[4px]">Онлайн:</Fit>
      <Badge className="ml-0">5</Badge>
      <span className="w-[7px] shrink-0" />
      <Bulb />
      <Fit w={94} className="ml-[6px]">Оффлайн:</Fit>
      <Badge className="ml-[7px]">0</Badge>
      <VDots className="ml-[22px] h-full" />
      <Fit w={169} className="ml-[41px]">На холостом ходу:</Fit>
      <Badge className="ml-[7px]">1</Badge>
    </div>
  );
}

/* ---------- device table ---------- */
function DeviceTable() {
  const shifts = ["pl-[15.500px]", "pl-[14.500px]", "pl-[13.500px]", "pl-[12.500px]", "pl-[11.500px]"];
  return (
    <div className="mt-[26.500px] h-[223.500px] w-[1152px] bg-[#666] text-white">
      <div className="flex h-[40px] items-center bg-[#4d4d4d] pl-[51.500px] text-[21.500px] text-[#8c8c8c]">
        <Fit w={107} className="pt-1">Устройство</Fit>
        <svg viewBox="0 0 24 24" className="ml-[35.500px] h-[24px] w-[24px] pt-px" fill="none" stroke="#fff" strokeWidth="1.700"><circle cx="12" cy="12" r="10.500" /><path d="M12 5v7.500l3.500 4M12 2v2M12 20v2M2 12h2M20 12h2" strokeWidth="1.400" /></svg>
        <Fit w={123} className="ml-[5px] pt-1.5">Дата и время</Fit>
        <Fit w={81} className="ml-[83px] pt-1">Позиция</Fit>
        <svg viewBox="0 0 26 24" className="ml-[59px] h-[24px] w-[26px]" fill="none" stroke="#fff" strokeWidth="1.800"><path d="M5 22a11.500 11.500 0 1 1 16 0M8 21h10" /><path d="M13 2v4M5 5.500l2.500 2.500M21 5.500L18.500 8M2 13h3.500M24 13h-3.500M4 20l2.500-1.500M22 20l-2.500-1.500" strokeWidth="1.300" /><path d="M13 14l4-6" strokeWidth="2" /><circle cx="12.500" cy="14.500" r="1.500" fill="#fff" /></svg>
        <Fit w={87} className="ml-[6.500px] pt-1">Скорость</Fit>
      </div>
      <div className="pt-[8px]">
        {shifts.map((s) => (
          <div key={s} className="h-[29.650px]">
            <div className={`flex h-[27.400px] items-center text-[17.500px] ${s}`}>
              <Fit w={115}>КДМ 011.553.72</Fit>
              <Fit w={81} className="ml-[64px]">2018-02-16</Fit>
              <Fit w={60} className="ml-[11px]">12:36:47</Fit>
              <Fit w={47} className="ml-[43px]">24′ 23″</Fit>
              <Fit w={48} className="ml-[8px]">43′ 89″</Fit>
              <Fit w={63.5} className="ml-[76.500px]">314 км/ч</Fit>
            </div>
            <HLine className="ml-[9px] mt-px w-[1121px]" />
          </div>
        ))}
      </div>
    </div>
  );
}

/* ---------- video column ---------- */
function VideoTile({ className }: { className: string }) {
  return (
    <div className={`flex w-[330px] justify-center bg-[#ff9736] pt-[64px] ${className}`}>
      <svg viewBox="-43 -43 86 86" className="h-[86px] w-[86px]">
        <circle r="37" fill="none" stroke="#ffb347" strokeWidth="9.800" />
        {Array.from({ length: 12 }, (_, i) => <circle key={i} cy="-37" r="2.900" fill="#ff9736" transform={`rotate(${i * 30})`} />)}
        <path d="M-10-15q0-3 2.500-1.200L13-1.500q2 1.500 0 3L-7.500 16.200Q-10 18-10 15z" fill="#ffb347" />
      </svg>
    </div>
  );
}

export default function App() {
  return (
    <div className="relative h-[1080px] w-[1919px] overflow-hidden bg-white font-['Open_Sans','Noto_Sans',sans-serif]">
      <Halftone />
      <Header />
      <div className="relative flex h-[952px]">
        <Sidebar />
        <main className="flex flex-col">
          <Toolbar />
          <div className="flex">
            <div className="ml-[31px] w-[1153px]">
              <MapPanel />
              <StatusBar />
              <DeviceTable />
            </div>
            <div className="ml-[31px] flex flex-col gap-[14px]">
              <VideoTile className="h-[213px]" />
              <VideoTile className="h-[213px]" />
              <VideoTile className="h-[213px]" />
              <VideoTile className="h-[204px]" />
            </div>
          </div>
        </main>
      </div>
      <footer className="relative flex h-[42px] items-center bg-[#999] pb-px pl-[91px] text-[16.500px] text-white">
        <Fit w={63}>Система</Fit>
        <Fit w={55} className="ml-[197px]">Оберег</Fit>
        <Fit w={279} className="ml-[84.500px]">Завод дорожной техники «Регион 45»</Fit>
        <Fit w={36} className="ml-[65.500px]">2018</Fit>
      </footer>
    </div>
  );
}
